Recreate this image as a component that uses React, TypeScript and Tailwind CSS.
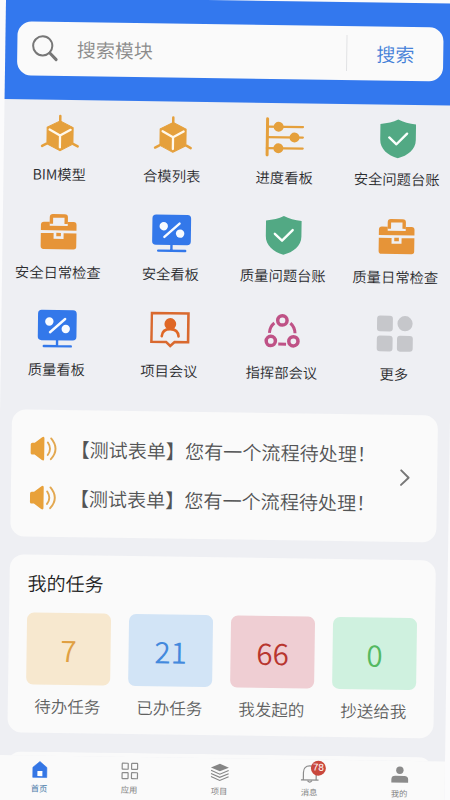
import React from 'react';

const Cube = () => (
  <svg viewBox="0 0 40 40" className="size-10">
    <path d="M20 2v7M6.500 30L2.200 32.300M33.500 30L37.800 32.300" stroke="#e5a03c" strokeWidth="2.500" strokeLinecap="round" />
    <path d="M20 7L33 13.500V30L20 36.800L7 30V13.500Z" fill="#e5a03c" stroke="#e5a03c" strokeLinejoin="round" />
    <path d="M9.500 15.800L20 21.700L30.500 15.800M20 21.700V33.500" fill="none" stroke="#fff8ea" strokeWidth="2.300" strokeLinecap="round" strokeLinejoin="round" />
  </svg>
);

const Sliders = () => (
  <svg viewBox="0 0 40 40" className="size-10" stroke="#e5a03c" fill="#e5a03c" strokeLinecap="round">
    <path d="M2.300 1.800V38" strokeWidth="3" />
    <path d="M2 9.700H37.800M2 20.200H37.800M2 31.200H37.800" strokeWidth="2.300" />
    <circle cx="13.500" cy="9.700" r="5" stroke="none" />
    <circle cx="29.500" cy="20.200" r="5" stroke="none" />
    <circle cx="13.500" cy="31.200" r="5" stroke="none" />
  </svg>
);

const Shield = () => (
  <svg viewBox="0 0 40 40" className="size-10">
    <path d="M20 .8C25 3.500 31 4.800 37.800 5.500V21C37.800 30.500 30 36.800 20 39.500C10 36.800 2.200 30.500 2.200 21V5.500C9 4.800 15 3.500 20 .8Z" fill="#52a984" />
    <path d="M11.200 18.800L18.500 25.500L29 14.800" fill="none" stroke="#fafffc" strokeWidth="2.400" strokeLinecap="round" strokeLinejoin="round" />
  </svg>
);

const Briefcase = () => (
  <svg viewBox="0 0 40 40" className="size-10">
    <path d="M12.600 12V5.500Q12.600 4 14.100 4H25.900Q27.400 4 27.400 5.500V12" fill="none" stroke="#e69438" strokeWidth="3.400" />
    <path d="M2.200 18.500V13Q2.200 10 5.200 10H11V14H29V10H34.800Q37.800 10 37.800 13V18.500Z" fill="#e69438" />
    <path d="M2.200 21.300H15V27H25V21.300H37.800V34.500Q37.800 37.300 35 37.300H5Q2.200 37.300 2.200 34.500Z" fill="#e69438" />
    <rect x="17.700" y="21" width="4.600" height="3.400" fill="#e69438" />
  </svg>
);

const Monitor = () => (
  <svg viewBox="0 0 40 40" className="size-10">
    <rect x=".6" y="1.200" width="38.700" height="30.300" rx="3.800" fill="#3378ea" />
    <path d="M20 31V37M6.800 37.300H33.800" stroke="#3378ea" strokeWidth="2.400" strokeLinecap="round" />
    <circle cx="12" cy="12.800" r="4.200" fill="#f8fbff" />
    <circle cx="28.500" cy="20" r="4.200" fill="#f8fbff" />
    <path d="M12.800 23.500L27.800 10" stroke="#f8fbff" strokeWidth="2.400" strokeLinecap="round" />
  </svg>
);

const Meeting = () => (
  <svg viewBox="0 0 40 40" className="size-10">
    <path d="M1.300 2.800H38V31.500H24.500L20.200 35.500L16 31.500H1.300Z" fill="none" stroke="#d9692f" strokeWidth="2.600" strokeLinejoin="miter" />
    <circle cx="20" cy="13.500" r="5.900" fill="#df6726" />
    <path d="M11.600 25.800C12 21 15 18.600 20 18.600C25 18.600 28 21 28.400 25.800" fill="none" stroke="#df6726" strokeWidth="2.600" strokeLinecap="round" />
  </svg>
);

const Circles = () => (
  <svg viewBox="0 0 40 40" className="size-10" fill="none" stroke="#bf5286">
    <g strokeWidth="3.500">
      <circle cx="20" cy="8.300" r="4.700" />
      <circle cx="8.700" cy="29" r="4.600" />
      <circle cx="31.300" cy="29" r="4.600" />
    </g>
    <path d="M7.200 21C7.400 16.800 8.800 13.500 12 11M32.800 21C32.600 16.800 31.200 13.500 28 11M16.200 32H24" strokeWidth="3" />
  </svg>
);

const More = () => (
  <svg viewBox="0 0 40 40" className="size-10" fill="#c6c7cb">
    <rect x="1.700" y="2" width="15.800" height="15.800" rx="3" />
    <circle cx="29.700" cy="9.800" r="7.600" />
    <rect x="1.700" y="22" width="15.800" height="15.800" rx="3" />
    <rect x="21.900" y="22" width="15.800" height="15.800" rx="3" />
  </svg>
);

const modules = [
  { label: 'BIM模型', Icon: Cube },
  { label: '合模列表', Icon: Cube },
  { label: '进度看板', Icon: Sliders },
  { label: '安全问题台账', Icon: Shield },
  { label: '安全日常检查', Icon: Briefcase },
  { label: '安全看板', Icon: Monitor },
  { label: '质量问题台账', Icon: Shield },
  { label: '质量日常检查', Icon: Briefcase },
  { label: '质量看板', Icon: Monitor },
  { label: '项目会议', Icon: Meeting },
  { label: '指挥部会议', Icon: Circles },
  { label: '更多', Icon: More },
];

const tasks = [
  { count: 7, label: '待办任务', tone: 'bg-[#f7e8cf] text-[#e0a042]' },
  { count: 21, label: '已办任务', tone: 'bg-[#d2e4f6] text-[#4389dd]' },
  { count: 66, label: '我发起的', tone: 'bg-[#efced3] text-[#b8362f]' },
  { count: 0, label: '抄送给我', tone: 'bg-[#cff1df] text-[#54b961]' },
];

const Speaker = () => (
  <svg viewBox="0 0 28 26" className="h-[26px] w-7 shrink-0">
    <path d="M2.800 7.200H5.200L12.500 1.700Q14.800 .3 14.800 2.800V23.200Q14.800 25.600 12.500 24.300L5.200 19H2.800Q1.200 19 1.200 17.400V8.800Q1.200 7.200 2.800 7.200Z" fill="#e8a13a" />
    <path d="M18.300 6.800Q22.700 13 18.300 19.200M21.500 2.600Q30.500 13 21.500 23.400" fill="none" stroke="#e3a850" strokeWidth="1.900" strokeLinecap="round" />
  </svg>
);

const Notice = () => (
  <div className="flex h-[49px] items-center">
    <Speaker />
    <span className="ml-[13px] whitespace-nowrap text-[19.100px] leading-7">【测试表单】您有一个流程待处理！</span>
  </div>
);

const HomeIcon = () => (
  <svg viewBox="0 0 20 20" className="size-5">
    <path d="M3 7.800L10 1.800L17 7.800V17.800H3Z" fill="#3476e5" stroke="#3476e5" strokeWidth=".6" strokeLinejoin="round" />
    <rect x="7.600" y="11.300" width="5" height="5.200" fill="#fff" />
  </svg>
);

const AppsIcon = () => (
  <svg viewBox="0 0 20 20" className="size-5" fill="none" stroke="#8b8b8b" strokeWidth="1.200">
    <rect x="2.300" y="2.300" width="6" height="6" rx=".6" />
    <rect x="11.700" y="2.300" width="6" height="6" rx=".6" />
    <rect x="2.300" y="11.700" width="6" height="6" rx=".6" />
    <rect x="11.700" y="11.700" width="6" height="6" rx=".6" />
  </svg>
);

const LayersIcon = () => (
  <svg viewBox="0 0 20 20" className="size-5">
    <path d="M10 1.600L19 5.300L10 9L1 5.300Z" fill="#858585" />
    <path d="M1.200 8.200L10 12L18.800 8.200M1.200 11.300L10 15.100L18.800 11.300M1.200 14.400L10 18.200L18.800 14.400" fill="none" stroke="#858585" strokeWidth="1.100" />
  </svg>
);

const BellIcon = () => (
  <svg viewBox="0 0 20 20" className="size-5" fill="none" stroke="#8b8b8b" strokeWidth="1.200">
    <path d="M1.200 16.400H18.800M3.600 16.200V9Q3.600 2.400 10 2.400Q16.400 2.400 16.400 9V16.200" />
    <path d="M7.800 17Q10 20 12.200 17" />
  </svg>
);

const PersonIcon = () => (
  <svg viewBox="0 0 20 20" className="size-5" fill="#8b8b8b">
    <circle cx="10" cy="5.400" r="3.700" />
    <path d="M1.600 17.800V14.500Q1.600 11 5.500 11H14.500Q18.400 11 18.400 14.500V17.800Z" />
  </svg>
);

const tabs = [
  { label: '首页', Icon: HomeIcon, color: 'text-[#4779a8]' },
  { label: '应用', Icon: AppsIcon, color: 'text-[#858585]' },
  { label: '项目', Icon: LayersIcon, color: 'text-[#858585]' },
  { label: '消息', Icon: BellIcon, color: 'text-[#858585]', badge: 78 },
  { label: '我的', Icon: PersonIcon, color: 'text-[#858585]' },
];

export default function App() {
  return (
    <div className="h-[800px] w-[450px] overflow-hidden bg-[#fbfbfc] font-['Noto_Sans_CJK_SC',sans-serif] font-[350]">
      <div className="-mt-[3px] ml-[6px] flex h-[830px] w-[450px] origin-[-6px_3px] rotate-[0.83deg] flex-col bg-[#eeeff3]">
        <header className="h-[101.500px] shrink-0 bg-[#3378ee] px-3 pt-6">
          <div className="flex h-[54px] items-center rounded-[14px] bg-[#fafafa]">
            <svg viewBox="0 0 28 28" className="ml-[14px] size-7 shrink-0" fill="none" stroke="#777">
              <circle cx="11.400" cy="11.200" r="9.600" strokeWidth="2" />
              <path d="M18.600 18.300L25 24.800" strokeWidth="3" strokeLinecap="round" />
            </svg>
            <span className="ml-[17.500px] text-[19px] leading-7 text-[#8b8b8b]">搜索模块</span>
            <span className="ml-auto h-9 w-px bg-[#e1e2e4]" />
            <span className="ml-[29px] mr-[29px] text-[19px] leading-7 text-[#4380d8]">搜索</span>
          </div>
        </header>

        <main className="shrink-0">
          <div className="grid grid-cols-4">
            {modules.map(({ label, Icon }) => (
              <div key={label} className="flex h-[97.500px] flex-col items-center pt-[14.500px]">
                <Icon />
                <span className="mt-[10px] whitespace-nowrap pr-px text-[14.300px] leading-5 text-[#2b2c2f]">{label}</span>
              </div>
            ))}
          </div>

          <section className="ml-3 mr-[12.500px] mt-[17.500px] flex h-[127px] items-center rounded-[14px] bg-[#fafafa] pl-[18px] text-[#535455]">
            <div className="flex-1">
              <Notice />
              <Notice />
            </div>
            <svg viewBox="0 0 12 20" className="mr-[25.500px] h-5 w-3" fill="none" stroke="#777" strokeWidth="2" strokeLinecap="round" strokeLinejoin="round">
              <path d="M2 2.500L9.500 9.700L2 17" />
            </svg>
          </section>

          <section className="mx-3 mt-[18px] h-[178.500px] rounded-[14px] bg-[#fafafa] px-[18px] pt-[14px]">
            <h2 className="text-[19px] leading-7 text-[#232323]">我的任务</h2>
            <div className="mt-[16.500px] grid grid-cols-4 gap-[18px]">
              {tasks.map(({ count, label, tone }) => (
                <div key={label} className="flex flex-col items-center">
                  <div className={`flex h-[72px] w-full items-center justify-center rounded-[7px] text-[29.500px] leading-9 ${tone}`}>{count}</div>
                  <span className="mt-[9px] whitespace-nowrap pr-px text-[16.500px] leading-6 text-[#606161]">{label}</span>
                </div>
              ))}
            </div>
          </section>

          <div className="mx-3 mt-[18.500px] h-[4px] overflow-hidden">
            <div className="h-8 rounded-t-[14px] bg-[#fafafa]" />
          </div>
        </main>

        <nav className="grid flex-1 grid-cols-5 bg-[#fafafa] pt-[4px]">
          {tabs.map(({ label, Icon, color, badge }) => (
            <div key={label} className="flex flex-col items-center">
              <div className="relative">
                <Icon />
                {badge && (
                  <span className="absolute -top-[3px] left-[11px] flex size-[15px] items-center justify-center rounded-full bg-[#c9483d] font-['Liberation_Sans',sans-serif] text-[10px] leading-none text-white">{badge}</span>
                )}
              </div>
              <span className={`mt-[2.500px] pr-px text-[8.300px] font-normal leading-3 ${color}`}>{label}</span>
            </div>
          ))}
        </nav>
      </div>
    </div>
  );
}
